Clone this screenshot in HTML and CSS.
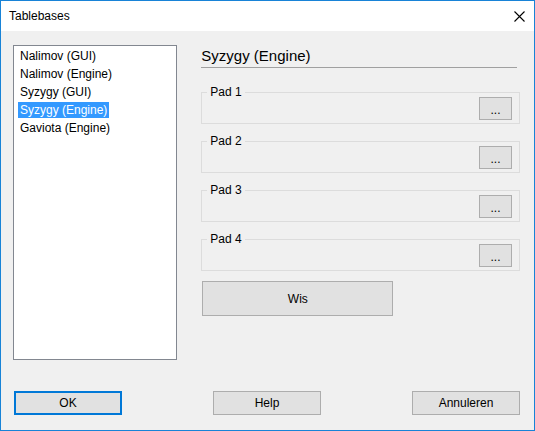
FILE: index.html
```html
<!DOCTYPE html>
<html>
<head>
<meta charset="utf-8">
<link rel="stylesheet" href="styles.css">
</head>
<body>
<div class="window">
  <div class="titlebar">
    <span class="title">Tablebases</span>
    <svg class="close" width="11" height="11" viewBox="0 0 11 11"><path d="M0.5 0.5 L10.5 10.5 M10.5 0.5 L0.5 10.5" stroke="#000" stroke-width="1.1" fill="none"/></svg>
  </div>
  <div class="content">
    <div class="main">
      <div class="listbox">
        <div class="item"><span>Nalimov (GUI)</span></div>
        <div class="item"><span>Nalimov (Engine)</span></div>
        <div class="item"><span>Syzygy (GUI)</span></div>
        <div class="item selected"><span>Syzygy (Engine)</span></div>
        <div class="item"><span>Gaviota (Engine)</span></div>
      </div>
      <div class="panel">
        <div class="heading">Syzygy (Engine)</div>
        <div class="groups">
          <div class="group"><span class="legend">Pad 1</span><button class="btn dots">...</button></div>
          <div class="group"><span class="legend">Pad 2</span><button class="btn dots">...</button></div>
          <div class="group"><span class="legend">Pad 3</span><button class="btn dots">...</button></div>
          <div class="group"><span class="legend">Pad 4</span><button class="btn dots">...</button></div>
        </div>
        <button class="btn wis">Wis</button>
      </div>
    </div>
    <div class="footer">
      <button class="btn foot default">OK</button>
      <button class="btn foot">Help</button>
      <button class="btn foot">Annuleren</button>
    </div>
  </div>
</div>
</body>
</html>
```

FILE: styles.css
```css
* { box-sizing: border-box; }
html, body { margin: 0; padding: 0; background: #f0f0f0; }
body { font-family: "Liberation Sans", Arial, sans-serif; font-size: 12px; color: #000; }

.window {
  width: 535px;
  height: 431px;
  border: 1px solid #1883d7;
  background: #f0f0f0;
  display: flex;
  flex-direction: column;
}

.titlebar {
  height: 30px;
  background: #fff;
  display: flex;
  align-items: center;
  justify-content: space-between;
  padding: 0 9px 0 8px;
  flex: none;
}
.title { font-size: 12px; line-height: 14px; }
.close { margin-right: 0; margin-top: 0; }

.content {
  flex: 1;
  display: flex;
  flex-direction: column;
  padding: 14px 14px 15px 12px;
}

.main {
  display: flex;
  gap: 24px;
  height: 315px;
}

.listbox {
  width: 165px;
  height: 315px;
  background: #fff;
  border: 1px solid #828790;
  padding: 1px 0 0 4px;
}
.item {
  height: 18px;
  display: flex;
  align-items: center;
}
.item span {
  display: inline-block;
  line-height: 16px;
  padding: 0 2px;
}
.item.selected span { background: #3399ff; color: #fff; }

.panel {
  width: 320px;
  display: flex;
  flex-direction: column;
}

.heading {
  font-size: 15px;
  line-height: 18px;
  height: 23px;
  padding-top: 2px;
  border-bottom: 1px solid #a0a0a0;
  margin-right: 3px;
}

.groups {
  margin-top: 24px;
  display: flex;
  flex-direction: column;
  gap: 17px;
}

.group {
  position: relative;
  height: 32px;
  border: 1px solid #dcdcdc;
  display: flex;
  justify-content: flex-end;
  align-items: flex-start;
  padding: 4px 7px 0 0;
}
.legend {
  position: absolute;
  top: -8px;
  left: 5px;
  padding: 0 3px;
  line-height: 14px;
  background: #f0f0f0;
}

.btn {
  font-family: "Liberation Sans", Arial, sans-serif;
  font-size: 12px;
  color: #000;
  background: #e1e1e1;
  border: 1px solid #adadad;
  padding: 0;
  margin: 0;
}
.dots { width: 33px; height: 23px; line-height: 14px; padding-top: 2px; }
.wis { width: 191px; height: 35px; margin: 10px 0 0 1px; }

.footer {
  margin-top: 31px;
  display: flex;
  justify-content: space-between;
  padding-left: 1px;
}
.foot { width: 108px; height: 24px; }
.foot.default { border: 2px solid #0078d7; }
```
